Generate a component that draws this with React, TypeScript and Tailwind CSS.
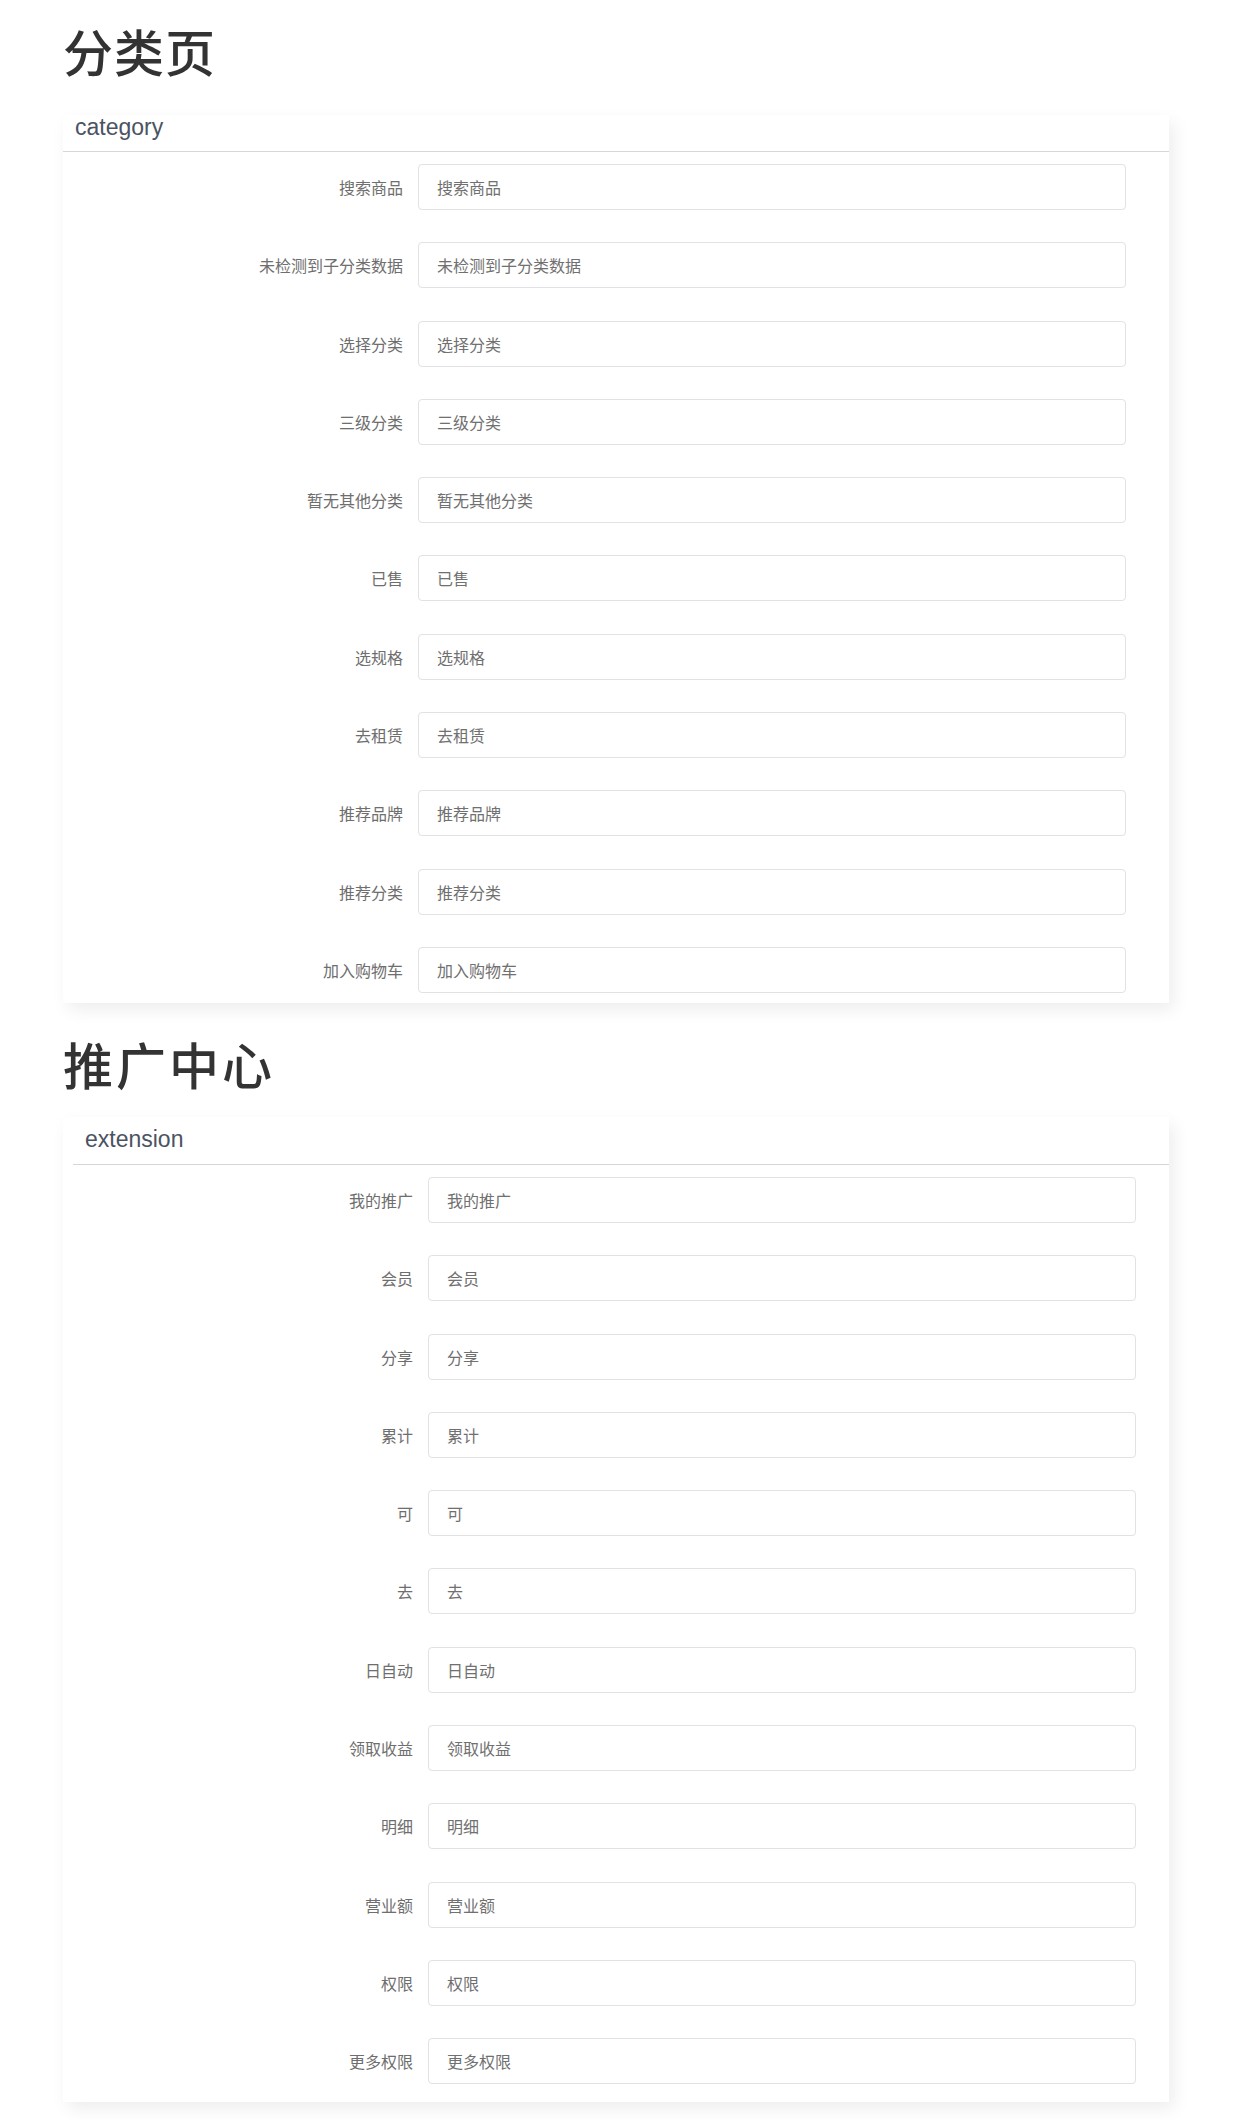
import React from "react";

const cjk = '"Noto Sans CJK SC", "Noto Sans", sans-serif';
const latin = '"Liberation Sans", Arial, sans-serif';

const categoryRows = [
  "搜索商品",
  "未检测到子分类数据",
  "选择分类",
  "三级分类",
  "暂无其他分类",
  "已售",
  "选规格",
  "去租赁",
  "推荐品牌",
  "推荐分类",
  "加入购物车",
];

const extensionRows = [
  "我的推广",
  "会员",
  "分享",
  "累计",
  "可",
  "去",
  "日自动",
  "领取收益",
  "明细",
  "营业额",
  "权限",
  "更多权限",
];

function Row({ text }: { text: string }) {
  return (
    <div className="flex items-center h-[46px]">
      <div
        className="w-[355px] shrink-0 pr-[15px] text-right text-[16px] text-[#6e6e6e]"
        style={{ fontFamily: cjk }}
      >
        {text}
      </div>
      <div
        className="w-[708px] h-[46px] shrink-0 flex items-center rounded-[4px] border border-[#e1e1e6] bg-white pl-[18px] text-[16px] text-[#707070]"
        style={{ fontFamily: cjk }}
      >
        {text}
      </div>
    </div>
  );
}

export default function App() {
  return (
    <div className="w-[1242px] min-h-[2120px] bg-white pl-[63px]">
      <h1
        className="mt-[13px] h-[75px] leading-[75px] text-[50px] font-medium text-[#333333] tracking-[1px]"
        style={{ fontFamily: cjk }}
      >
        分类页
      </h1>

      <div className="mt-[27px] w-[1106px] bg-white pb-[10px] shadow-[5px_7px_16px_rgba(0,0,0,0.07)]">
        <div className="h-[37px] border-b border-[#d6d6d6]">
          <div
            className="pl-[12px] text-[23px] leading-[25px] text-[#4b5363]"
            style={{ fontFamily: latin }}
          >
            category
          </div>
        </div>
        <div className="flex flex-col gap-y-[32.3px] pt-[12px]">
          {categoryRows.map((r) => (
            <Row key={r} text={r} />
          ))}
        </div>
      </div>

      <h1
        className="mt-[23px] h-[75px] leading-[75px] text-[50px] font-medium text-[#333333] tracking-[3px]"
        style={{ fontFamily: cjk }}
      >
        推广中心
      </h1>

      <div className="mt-[16px] w-[1106px] bg-white pb-[18px] shadow-[5px_7px_16px_rgba(0,0,0,0.07)]">
        <div className="ml-[10px] h-[48px] border-b border-[#d6d6d6] pt-[10px]">
          <div
            className="pl-[12px] text-[23px] leading-[25px] text-[#4b5363]"
            style={{ fontFamily: latin }}
          >
            extension
          </div>
        </div>
        <div className="flex flex-col gap-y-[32.3px] pl-[10px] pt-[12px]">
          {extensionRows.map((r) => (
            <Row key={r} text={r} />
          ))}
        </div>
      </div>
    </div>
  );
}
